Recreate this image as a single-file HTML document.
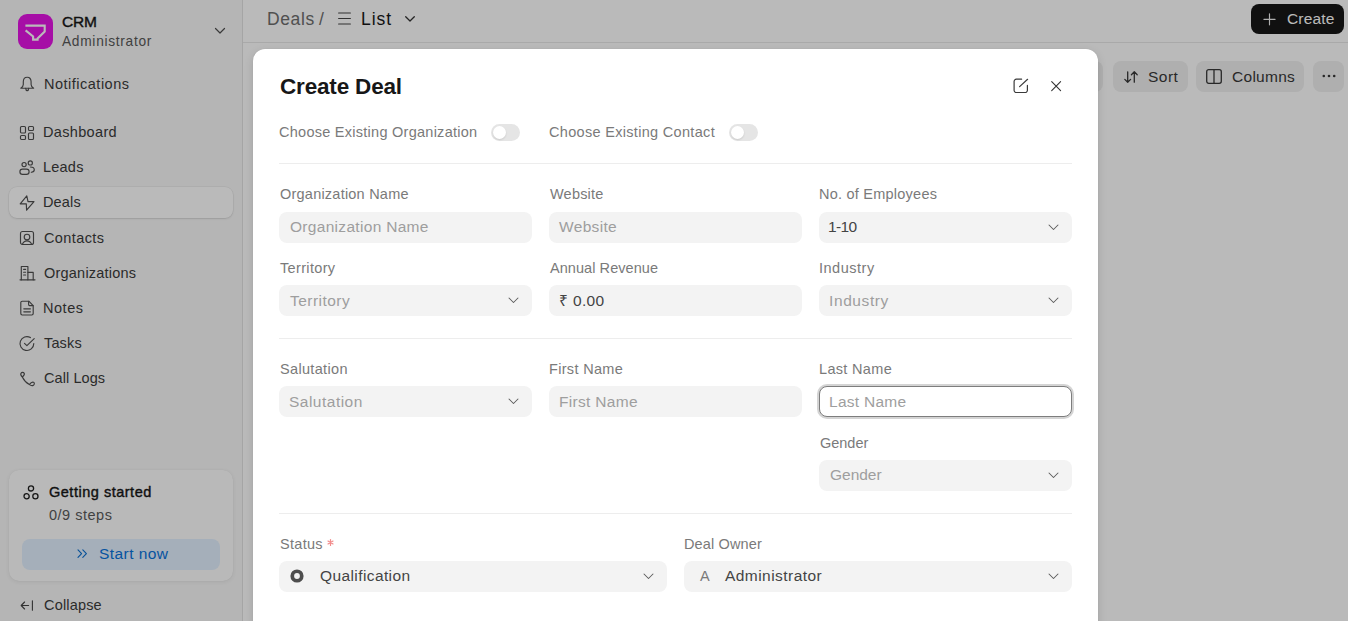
<!DOCTYPE html>
<html><head><meta charset="utf-8">
<style>
*{box-sizing:border-box;margin:0;padding:0}
html,body{width:1348px;height:621px;overflow:hidden;background:#fff;font-family:"Liberation Sans",sans-serif;position:relative}
.abs{position:absolute}
svg{display:block;overflow:visible}
.t{position:absolute;white-space:nowrap;line-height:1;display:block}
.ic{position:absolute}
.inp{position:absolute;height:30.8px;border-radius:8px;background:#f3f3f3}
.tbtn{position:absolute;top:61.2px;height:30.6px;border-radius:8px;background:#f0f0f0}
.div{position:absolute;left:26px;width:793px;height:1px;background:#ededed}
.tog{position:absolute;width:29px;height:17px;border-radius:9px;background:#e5e5e5}
.tog i{position:absolute;left:2px;top:2px;width:13px;height:13px;border-radius:50%;background:#fff;box-shadow:0 1px 2px rgba(0,0,0,.12)}
</style></head>
<body>
<div class="abs" style="left:0;top:0;width:242px;height:621px;background:#f8f8f8"></div>
<div class="abs" style="left:242px;top:0;width:1px;height:621px;background:#e2e2e2"></div>
<div class="abs" style="left:243px;top:42px;width:1105px;height:1px;background:#e8e8e8"></div>

<!-- logo -->
<div class="abs" style="left:18px;top:14px;width:35px;height:35px;border-radius:9px;background:#e414e4"></div>
<svg class="ic" style="left:18px;top:14px" width="35" height="35" viewBox="0 0 35 35"><path d="M7.4 11.6H26.7V17.6L19.6 24.4V25.6H15.1V22.4L7.6 16.4" fill="none" stroke="#fff" stroke-width="2.1" stroke-linejoin="miter"/></svg>
<svg class="ic" style="left:215px;top:28px" width="10" height="6" viewBox="0 0 10 6"><path d="M0.5 0.5L5 5L9.5 0.5" fill="none" stroke="#505050" stroke-width="1.2" stroke-linecap="round" stroke-linejoin="round"/></svg>

<!-- active nav -->
<div class="abs" style="left:9px;top:187px;width:224px;height:31px;border-radius:8px;background:#fff;box-shadow:0 0 0 0.5px rgba(0,0,0,0.07),0 1px 2px rgba(0,0,0,0.1)"></div>

<!-- nav icons (16x16 boxes) -->
<svg class="ic" style="left:18.5px;top:75.5px" width="16" height="16" viewBox="0 0 16 16" fill="none" stroke="#505050" stroke-width="1.15" stroke-linecap="round" stroke-linejoin="round"><path d="M8.2 1.2C5.7 1.2 4.3 3.2 4.3 5.8V8.4C4.3 9.9 3.3 11.1 1.8 12.2H14.6C13.1 11.1 12.1 9.9 12.1 8.4V5.8C12.1 3.2 10.7 1.2 8.2 1.2Z"/><path d="M6.7 12.4C6.8 13.8 7.4 14.6 8.2 14.6C9 14.6 9.6 13.8 9.7 12.4"/></svg>
<svg class="ic" style="left:18.8px;top:124.8px" width="16" height="16" viewBox="0 0 16 16" fill="none" stroke="#505050" stroke-width="1.15" stroke-linecap="round" stroke-linejoin="round"><rect x="1.5" y="1.5" width="5" height="6.5" rx="1"/><rect x="9.5" y="1.5" width="5" height="4" rx="1"/><rect x="9.5" y="8" width="5" height="6.5" rx="1"/><rect x="1.5" y="10.5" width="5" height="4" rx="1"/></svg>
<svg class="ic" style="left:18.8px;top:160px" width="16" height="16" viewBox="0 0 16 16" fill="none" stroke="#505050" stroke-width="1.15" stroke-linecap="round" stroke-linejoin="round"><circle cx="5.1" cy="4.6" r="2.1"/><circle cx="11.3" cy="2.9" r="2.1"/><rect x="0.9" y="9.1" width="9.2" height="5.2" rx="2.6"/><path d="M11.4 7C13.6 7 15.3 8.3 15.3 9.8C15.3 11.2 14 12.2 12.3 12.3"/></svg>
<svg class="ic" style="left:18.8px;top:194.8px" width="16" height="16" viewBox="0 0 16 16" fill="none" stroke="#505050" stroke-width="1.15" stroke-linecap="round" stroke-linejoin="round"><path d="M7.8 0.9L1.2 8.9H7.3L7.6 15.1L15 6.6H9L7.8 0.9z"/></svg>
<svg class="ic" style="left:18.8px;top:229.8px" width="16" height="16" viewBox="0 0 16 16" fill="none" stroke="#505050" stroke-width="1.15" stroke-linecap="round" stroke-linejoin="round"><rect x="1.5" y="1.5" width="13" height="13" rx="2"/><circle cx="8" cy="7" r="2.8"/><path d="M3.3 14.4c.9-2.2 2.6-3.5 4.7-3.5s3.8 1.3 4.7 3.5"/></svg>
<svg class="ic" style="left:18.8px;top:264.8px" width="16" height="16" viewBox="0 0 16 16" fill="none" stroke="#505050" stroke-width="1.15" stroke-linecap="round" stroke-linejoin="round"><path d="M1 14.8h15"/><path d="M2.3 14.8V1.5h6.6v13.3"/><path d="M8.9 7.3h5.3v7.5"/><path d="M4.6 4.4h2M4.6 7.2h2M4.6 10h2"/></svg>
<svg class="ic" style="left:18.8px;top:299.8px" width="16" height="16" viewBox="0 0 16 16" fill="none" stroke="#505050" stroke-width="1.15" stroke-linecap="round" stroke-linejoin="round"><path d="M9.8 1.2H3.2c-.8 0-1.4.6-1.4 1.4v11c0 .8.6 1.4 1.4 1.4h9.6c.8 0 1.4-.6 1.4-1.4V5.6z"/><path d="M9.6 1.4v3.2c0 .6.4 1 1 1h3.4"/><path d="M4.8 8.8h6.6M4.8 11.8h6.6"/></svg>
<svg class="ic" style="left:18.8px;top:335.5px" width="16" height="16" viewBox="0 0 16 16" fill="none" stroke="#505050" stroke-width="1.15" stroke-linecap="round" stroke-linejoin="round"><path d="M11.4 1.6A6.9 6.9 0 1 0 14.8 7.6"/><path d="M5.5 7.4L7.9 9.6L15.2 2.7"/></svg>
<svg class="ic" style="left:18.8px;top:370.8px" width="16" height="16" viewBox="0 0 16 16" fill="none" stroke="#505050" stroke-width="1.15" stroke-linecap="round" stroke-linejoin="round"><path d="M3.3 6C2 4.8 1.3 3.5 2 2.3C2.7 1.1 4.5 1.1 5.2 2.3C5.8 3.4 4.5 5 3.3 6C5 9.4 7.4 12 10.4 13.6C11.4 12.2 13.1 10.8 14.5 11.3C15.7 11.8 15.6 13.8 14.2 14.4C12.8 15 11.5 14.4 10.4 13.6"/></svg>

<!-- getting started card -->
<div class="abs" style="left:9px;top:470px;width:224px;height:111px;border-radius:10px;background:#fefefe;box-shadow:0 0 1px rgba(0,0,0,0.08),0 1px 4px rgba(0,0,0,0.07)"></div>
<svg class="ic" style="left:22.5px;top:484.5px" width="16" height="15" viewBox="0 0 16 15" fill="none" stroke="#1f1f1f" stroke-width="1.3"><circle cx="8" cy="3.4" r="2.6"/><circle cx="3.6" cy="11.2" r="2.6"/><circle cx="12.4" cy="11.2" r="2.6"/></svg>
<div class="abs" style="left:22px;top:539px;width:198px;height:31px;border-radius:8px;background:#e2f0ff"></div>
<svg class="ic" style="left:76.5px;top:549px" width="11" height="10" viewBox="0 0 11 10" fill="none" stroke="#0a6fd1" stroke-width="1.1" stroke-linecap="round" stroke-linejoin="round"><path d="M1 0.8L4.6 4.6L1 8.4M5.8 0.8L9.4 4.6L5.8 8.4"/></svg>
<svg class="ic" style="left:20px;top:599.5px" width="14" height="11" viewBox="0 0 14 11" fill="none" stroke="#444" stroke-width="1.1" stroke-linecap="round" stroke-linejoin="round"><path d="M8.6 5.5H1.2M4.6 2L1.2 5.5L4.6 9M12.4 0.8V10.2"/></svg>

<span class="t" id="crm" style="left:62.00px;top:14.00px;font-size:15.50px;letter-spacing:-0.200px;color:#171717;-webkit-text-stroke:0.4px #171717;">CRM</span>
<span class="t" id="admin" style="left:62.00px;top:35.00px;font-size:13.75px;letter-spacing:0.700px;color:#595959;">Administrator</span>
<span class="t" id="n_notif" style="left:44.00px;top:77.00px;font-size:14.50px;letter-spacing:0.500px;color:#3b3b3b;">Notifications</span>
<span class="t" id="n_dash" style="left:43.00px;top:125.00px;font-size:14.50px;letter-spacing:0.338px;color:#3b3b3b;">Dashboard</span>
<span class="t" id="n_leads" style="left:43.00px;top:160.00px;font-size:14.50px;letter-spacing:0.225px;color:#3b3b3b;">Leads</span>
<span class="t" id="n_deals" style="left:43.00px;top:195.00px;font-size:14.50px;letter-spacing:0.150px;color:#3b3b3b;">Deals</span>
<span class="t" id="n_cont" style="left:44.00px;top:231.00px;font-size:14.50px;letter-spacing:0.400px;color:#3b3b3b;">Contacts</span>
<span class="t" id="n_org" style="left:44.00px;top:266.00px;font-size:14.50px;letter-spacing:0.217px;color:#3b3b3b;">Organizations</span>
<span class="t" id="n_notes" style="left:43.00px;top:301.00px;font-size:14.50px;letter-spacing:0.525px;color:#3b3b3b;">Notes</span>
<span class="t" id="n_tasks" style="left:44.00px;top:336.00px;font-size:14.50px;letter-spacing:0.150px;color:#3b3b3b;">Tasks</span>
<span class="t" id="n_calls" style="left:44.00px;top:371.00px;font-size:14.50px;letter-spacing:0.075px;color:#3b3b3b;">Call Logs</span>
<span class="t" id="gs" style="left:49.00px;top:485.00px;font-size:14.50px;letter-spacing:0.514px;color:#171717;-webkit-text-stroke:0.4px #171717;">Getting started</span>
<span class="t" id="steps" style="left:49.00px;top:508.00px;font-size:14.50px;letter-spacing:0.512px;color:#5a5a5a;">0/9 steps</span>
<span class="t" id="start" style="left:99.00px;top:546.00px;font-size:15.50px;letter-spacing:0.438px;color:#0873dc;">Start now</span>
<span class="t" id="collapse" style="left:44.00px;top:598.00px;font-size:14.50px;letter-spacing:0.171px;color:#3b3b3b;">Collapse</span>

<!-- header icons -->
<svg class="ic" style="left:337.5px;top:12px" width="13" height="13" viewBox="0 0 13 13" fill="none" stroke="#444" stroke-width="1.1" stroke-linecap="round"><path d="M0.6 1h11.8M0.6 6.5h11.8M0.6 12h11.8"/></svg>
<svg class="ic" style="left:405px;top:16px" width="10" height="6" viewBox="0 0 10 6" fill="none" stroke="#333" stroke-width="1.3" stroke-linecap="round" stroke-linejoin="round"><path d="M0.7 0.7L5 5L9.3 0.7"/></svg>
<div class="abs" style="left:1251px;top:4px;width:93px;height:30px;border-radius:8px;background:#171717"></div>
<svg class="ic" style="left:1262.5px;top:12.5px" width="13" height="13" viewBox="0 0 13 13" fill="none" stroke="#f0f0f0" stroke-width="1.15" stroke-linecap="round"><path d="M6.5 0.8v11M0.9 6.3h11.2"/></svg>
<!-- toolbar -->
<div class="tbtn" style="left:1030px;width:73.4px"></div>
<div class="tbtn" style="left:1112.8px;width:75px"></div>
<div class="tbtn" style="left:1196.4px;width:107.3px"></div>
<div class="tbtn" style="left:1313px;width:30.7px"></div>
<svg class="ic" style="left:1123.5px;top:70.5px" width="14" height="12" viewBox="0 0 14 12" fill="none" stroke="#383838" stroke-width="1.3" stroke-linecap="round" stroke-linejoin="round"><path d="M3.7 0.8v10.5M0.8 8.4l2.9 2.9 2.9-2.9M10.3 11.2V0.8M7.4 3.7l2.9-2.9 2.9 2.9"/></svg>
<svg class="ic" style="left:1206px;top:68.5px" width="16" height="15" viewBox="0 0 16 15" fill="none" stroke="#383838" stroke-width="1.3"><rect x="0.7" y="0.7" width="14.6" height="13.6" rx="2"/><path d="M8 0.7v13.6"/></svg>
<svg class="ic" style="left:1321.5px;top:74px" width="14" height="4" viewBox="0 0 14 4" fill="#383838"><circle cx="1.8" cy="2" r="1.3"/><circle cx="7" cy="2" r="1.3"/><circle cx="12.2" cy="2" r="1.3"/></svg>

<span class="t" id="h_deals" style="left:267.00px;top:11.00px;font-size:17.50px;letter-spacing:0.600px;color:#6e6e6e;">Deals</span>
<span class="t" id="h_slash" style="left:319.00px;top:11.00px;font-size:17.50px;letter-spacing:0.000px;color:#6e6e6e;">/</span>
<span class="t" id="h_list" style="left:361.00px;top:11.00px;font-size:17.50px;letter-spacing:1.000px;color:#171717;">List</span>
<span class="t" id="h_create" style="left:1287.00px;top:11.00px;font-size:15.50px;letter-spacing:0.160px;color:#ffffff;">Create</span>
<span class="t" id="tb_sort" style="left:1148.00px;top:69.00px;font-size:15.50px;letter-spacing:0.500px;color:#383838;">Sort</span>
<span class="t" id="tb_cols" style="left:1232.00px;top:69.00px;font-size:15.50px;letter-spacing:0.283px;color:#383838;">Columns</span>

<div class="abs" style="left:0;top:0;width:1348px;height:621px;background:rgba(0,0,0,0.27)"></div>

<div class="abs" style="left:253px;top:49px;width:845px;height:620px;background:#fff;border-radius:12px;box-shadow:0 0 1px rgba(0,0,0,0.1),0 3px 10px rgba(0,0,0,0.13)"></div>
<svg class="ic" style="left:1013px;top:78px" width="16" height="16" viewBox="0 0 16 16" fill="none" stroke="#3a3a3a" stroke-width="1.2" stroke-linecap="round" stroke-linejoin="round"><path d="M8.6 1.2H3.4A2.3 2.3 0 0 0 1.1 3.5V12.2A2.3 2.3 0 0 0 3.4 14.5H12.1A2.3 2.3 0 0 0 14.4 12.2V7.4"/><path d="M6.6 8.6L14.6 1.3"/></svg>
<svg class="ic" style="left:1050.5px;top:80.5px" width="11" height="11" viewBox="0 0 11 11" fill="none" stroke="#333" stroke-width="1.1" stroke-linecap="round"><path d="M0.7 0.7l8.9 8.9M9.6 0.7l-8.9 8.9"/></svg>

<div class="tog" style="left:491px;top:124px"><i></i></div>
<div class="tog" style="left:729px;top:124px"><i></i></div>

<div class="div" style="left:279px;top:163px"></div>
<div class="div" style="left:279px;top:338px"></div>
<div class="div" style="left:279px;top:513px"></div>

<div class="inp" style="left:279px;top:211.8px;width:253px"></div>
<div class="inp" style="left:549px;top:211.8px;width:253px"></div>
<div class="inp" style="left:819px;top:211.8px;width:253px"></div>
<div class="inp" style="left:279px;top:285.2px;width:253px"></div>
<div class="inp" style="left:549px;top:285.2px;width:253px"></div>
<div class="inp" style="left:819px;top:285.2px;width:253px"></div>
<div class="inp" style="left:279px;top:386.2px;width:253px"></div>
<div class="inp" style="left:549px;top:386.2px;width:253px"></div>
<div class="inp" style="left:819px;top:386.2px;width:253px;background:#fff;border:1px solid #7d7d7d;box-shadow:0 0 0 2px #d4d4d4"></div>
<div class="inp" style="left:819px;top:459.8px;width:253px"></div>
<div class="inp" style="left:279px;top:561px;width:388px"></div>
<div class="inp" style="left:684px;top:561px;width:388px"></div>

<div class="abs" style="left:1048px;top:223.5px;width:11px;height:7px"><svg width="11" height="7" viewBox="0 0 11 7"><path d="M1 1l4.5 4.5L10 1" fill="none" stroke="#5c5c5c" stroke-width="1.05" stroke-linecap="round" stroke-linejoin="round"/></svg></div>
<div class="abs" style="left:508px;top:297px;width:11px;height:7px"><svg width="11" height="7" viewBox="0 0 11 7"><path d="M1 1l4.5 4.5L10 1" fill="none" stroke="#5c5c5c" stroke-width="1.05" stroke-linecap="round" stroke-linejoin="round"/></svg></div>
<div class="abs" style="left:1048px;top:297px;width:11px;height:7px"><svg width="11" height="7" viewBox="0 0 11 7"><path d="M1 1l4.5 4.5L10 1" fill="none" stroke="#5c5c5c" stroke-width="1.05" stroke-linecap="round" stroke-linejoin="round"/></svg></div>
<div class="abs" style="left:508px;top:398px;width:11px;height:7px"><svg width="11" height="7" viewBox="0 0 11 7"><path d="M1 1l4.5 4.5L10 1" fill="none" stroke="#5c5c5c" stroke-width="1.05" stroke-linecap="round" stroke-linejoin="round"/></svg></div>
<div class="abs" style="left:1048px;top:471.5px;width:11px;height:7px"><svg width="11" height="7" viewBox="0 0 11 7"><path d="M1 1l4.5 4.5L10 1" fill="none" stroke="#5c5c5c" stroke-width="1.05" stroke-linecap="round" stroke-linejoin="round"/></svg></div>
<div class="abs" style="left:643px;top:572.5px;width:11px;height:7px"><svg width="11" height="7" viewBox="0 0 11 7"><path d="M1 1l4.5 4.5L10 1" fill="none" stroke="#5c5c5c" stroke-width="1.05" stroke-linecap="round" stroke-linejoin="round"/></svg></div>
<div class="abs" style="left:1048px;top:572.5px;width:11px;height:7px"><svg width="11" height="7" viewBox="0 0 11 7"><path d="M1 1l4.5 4.5L10 1" fill="none" stroke="#5c5c5c" stroke-width="1.05" stroke-linecap="round" stroke-linejoin="round"/></svg></div>

<svg class="ic" style="left:289.5px;top:568.5px" width="14" height="14" viewBox="0 0 14 14"><circle cx="7" cy="7" r="4.75" fill="none" stroke="#4e4e4e" stroke-width="3.7"/></svg>
<svg class="ic" style="left:326.5px;top:538.5px" width="7" height="7" viewBox="0 0 7 7" fill="none" stroke="#f28c8c" stroke-width="1.25" stroke-linecap="round"><path d="M3.5 0.6v5.8M1 2.05l5 2.9M6 2.05l-5 2.9"/></svg>

<span class="t" id="title" style="left:280.00px;top:76.00px;font-size:22.50px;letter-spacing:-0.170px;color:#171717;font-weight:bold;">Create Deal</span>
<span class="t" id="ch_org" style="left:279.00px;top:125.00px;font-size:14.50px;letter-spacing:0.263px;color:#7a7a7a;">Choose Existing Organization</span>
<span class="t" id="ch_con" style="left:549.00px;top:125.00px;font-size:14.50px;letter-spacing:0.314px;color:#7a7a7a;">Choose Existing Contact</span>
<span class="t" id="l_orgname" style="left:280.00px;top:187.00px;font-size:14.50px;letter-spacing:0.225px;color:#7a7a7a;">Organization Name</span>
<span class="t" id="l_web" style="left:550.00px;top:187.00px;font-size:14.50px;letter-spacing:0.200px;color:#7a7a7a;">Website</span>
<span class="t" id="l_emp" style="left:819.00px;top:187.00px;font-size:14.50px;letter-spacing:0.233px;color:#7a7a7a;">No. of Employees</span>
<span class="t" id="p_orgname" style="left:290.00px;top:219.00px;font-size:15.50px;letter-spacing:0.306px;color:#9e9e9e;">Organization Name</span>
<span class="t" id="p_web" style="left:559.00px;top:219.00px;font-size:15.50px;letter-spacing:0.333px;color:#9e9e9e;">Website</span>
<span class="t" id="v_emp" style="left:828.00px;top:219.00px;font-size:15.50px;letter-spacing:-0.600px;color:#444444;">1-10</span>
<span class="t" id="l_terr" style="left:280.00px;top:261.00px;font-size:14.50px;letter-spacing:0.337px;color:#7a7a7a;">Territory</span>
<span class="t" id="l_rev" style="left:550.00px;top:261.00px;font-size:14.50px;letter-spacing:0.062px;color:#7a7a7a;">Annual Revenue</span>
<span class="t" id="l_ind" style="left:819.00px;top:261.00px;font-size:14.50px;letter-spacing:0.514px;color:#7a7a7a;">Industry</span>
<span class="t" id="p_terr" style="left:290.00px;top:293.00px;font-size:15.50px;letter-spacing:0.462px;color:#9e9e9e;">Territory</span>
<span class="t" id="v_rev" style="left:559.00px;top:293.00px;font-size:15.50px;letter-spacing:0.320px;color:#444444;">₹ 0.00</span>
<span class="t" id="p_ind" style="left:829.00px;top:293.00px;font-size:15.50px;letter-spacing:0.600px;color:#9e9e9e;">Industry</span>
<span class="t" id="l_sal" style="left:280.00px;top:362.00px;font-size:14.50px;letter-spacing:0.333px;color:#7a7a7a;">Salutation</span>
<span class="t" id="l_first" style="left:549.00px;top:362.00px;font-size:14.50px;letter-spacing:0.322px;color:#7a7a7a;">First Name</span>
<span class="t" id="l_last" style="left:819.00px;top:362.00px;font-size:14.50px;letter-spacing:0.325px;color:#7a7a7a;">Last Name</span>
<span class="t" id="p_sal" style="left:289.00px;top:394.00px;font-size:15.50px;letter-spacing:0.489px;color:#9e9e9e;">Salutation</span>
<span class="t" id="p_first" style="left:559.00px;top:394.00px;font-size:15.50px;letter-spacing:0.311px;color:#9e9e9e;">First Name</span>
<span class="t" id="p_last" style="left:829.00px;top:394.00px;font-size:15.50px;letter-spacing:0.275px;color:#9e9e9e;">Last Name</span>
<span class="t" id="l_gender" style="left:820.00px;top:436.00px;font-size:14.50px;letter-spacing:-0.020px;color:#7a7a7a;">Gender</span>
<span class="t" id="p_gender" style="left:830.00px;top:467.00px;font-size:15.50px;letter-spacing:-0.020px;color:#9e9e9e;">Gender</span>
<span class="t" id="l_status" style="left:280.00px;top:537.00px;font-size:14.50px;letter-spacing:0.300px;color:#7a7a7a;">Status</span>
<span class="t" id="l_owner" style="left:684.00px;top:537.00px;font-size:14.50px;letter-spacing:0.144px;color:#7a7a7a;">Deal Owner</span>
<span class="t" id="v_qual" style="left:320.00px;top:568.00px;font-size:15.50px;letter-spacing:0.400px;color:#444444;">Qualification</span>
<span class="t" id="v_a" style="left:700.00px;top:569.00px;font-size:14.50px;letter-spacing:0.000px;color:#7a7a7a;">A</span>
<span class="t" id="v_admin" style="left:725.00px;top:568.00px;font-size:15.50px;letter-spacing:0.450px;color:#444444;">Administrator</span>
</body></html>
